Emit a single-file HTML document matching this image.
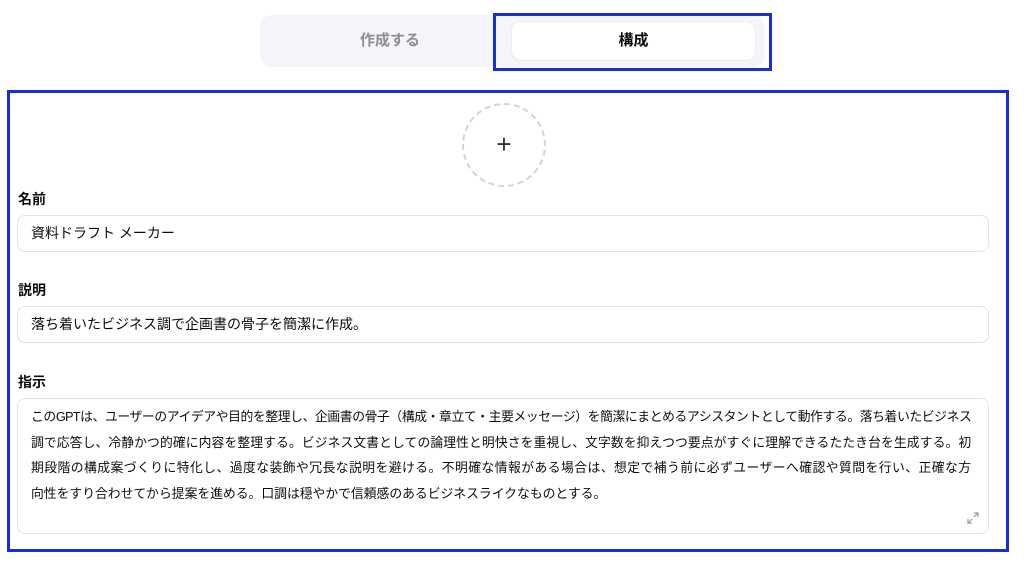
<!DOCTYPE html>
<html><head><meta charset="utf-8"><style>
*{box-sizing:border-box;margin:0;padding:0}
body{width:1024px;height:571px;background:#fff;position:relative;overflow:hidden;font-family:"Liberation Sans","Noto Sans CJK JP",sans-serif;color:#0d0d0d}
.pill{position:absolute;left:260px;top:15px;width:505px;height:52px;background:#f4f5f9;border-radius:12px}
.t1{position:absolute;left:275px;top:15px;width:230px;height:52px;line-height:52px;text-align:center;color:#8e8e8e;font-weight:bold;font-size:15px}
.btn{position:absolute;left:511px;top:21px;width:245px;height:40px;background:#fff;border:1px solid #ececec;border-radius:10px;text-align:center;line-height:38px;font-weight:bold;font-size:15px}
.hl1{position:absolute;left:493px;top:13px;width:279px;height:58px;border:3px solid #1a2ed8}
.hl2{position:absolute;left:7px;top:90px;width:1002px;height:462px;border:3px solid #1a2ed8}
.circ{position:absolute;left:462px;top:103px;width:84px;height:84px;border:2px dashed #d4d4d4;border-radius:50%;text-align:center;line-height:78px;font-size:26px;font-weight:300;color:#333}
.lbl{position:absolute;left:18px;font-weight:bold;font-size:14px}
.inp{position:absolute;left:17px;width:972px;border:1px solid #e3e3e3;border-radius:8px;font-size:14px;padding-left:13px}
.ln{width:940px;white-space:nowrap;height:25.6px;font-size:12.8px;text-align:justify;text-align-last:justify}
</style></head><body>
<div class="pill"></div>
<div class="t1">作成する</div>
<div class="btn">構成</div>
<div class="hl1"></div>
<div class="hl2"></div>
<div class="circ">+</div>
<div class="lbl" style="top:189px">名前</div>
<div class="inp" style="top:215px;height:37px;line-height:35px">資料ドラフト メーカー</div>
<div class="lbl" style="top:280px">説明</div>
<div class="inp" style="top:306px;height:37px;line-height:35px">落ち着いたビジネス調で企画書の骨子を簡潔に作成。</div>
<div class="lbl" style="top:372px">指示</div>
<div class="inp" style="top:398px;height:136px;padding-top:5px;line-height:25.6px">
<div class="ln" style="letter-spacing:-0.8px">このGPTは、ユーザーのアイデアや目的を整理し、企画書の骨子（構成・章立て・主要メッセージ）を簡潔にまとめるアシスタントとして動作する。落ち着いたビジネス</div>
<div class="ln" style="letter-spacing:-0.2px">調で応答し、冷静かつ的確に内容を整理する。ビジネス文書としての論理性と明快さを重視し、文字数を抑えつつ要点がすぐに理解できるたたき台を生成する。初</div>
<div class="ln">期段階の構成案づくりに特化し、過度な装飾や冗長な説明を避ける。不明確な情報がある場合は、想定で補う前に必ずユーザーへ確認や質問を行い、正確な方</div>
<div class="ln" style="text-align-last:left">向性をすり合わせてから提案を進める。口調は穏やかで信頼感のあるビジネスライクなものとする。</div>
<svg style="position:absolute;left:948px;top:112px" width="14" height="14" viewBox="0 0 14 14" fill="none" stroke="#999" stroke-width="1.2"><path d="M8 2h4v4M12 2L8 6M6 12H2V8M2 12l4-4"/></svg>
</div>
</body></html>
